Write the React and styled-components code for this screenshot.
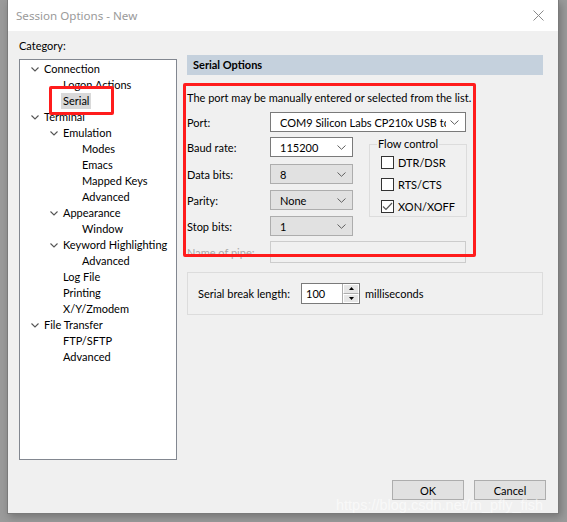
import React from 'react';
import styled, { createGlobalStyle } from 'styled-components';

const GlobalStyle = createGlobalStyle`
  html, body {
    margin: 0;
    padding: 0;
    background: #9b9b9b;
    font-family: Lato, "Liberation Sans", sans-serif;
    font-size: 11px;
    color: #000;
  }
  #root {
    width: 567px;
    height: 522px;
    overflow: hidden;
  }
`;

const TREE = [
  { label: 'Connection', level: 0, open: true },
  { label: 'Logon Actions', level: 1 },
  { label: 'Serial', level: 1, selected: true },
  { label: 'Terminal', level: 0, open: true },
  { label: 'Emulation', level: 1, open: true },
  { label: 'Modes', level: 2 },
  { label: 'Emacs', level: 2 },
  { label: 'Mapped Keys', level: 2 },
  { label: 'Advanced', level: 2 },
  { label: 'Appearance', level: 1, open: true },
  { label: 'Window', level: 2 },
  { label: 'Keyword Highlighting', level: 1, open: true },
  { label: 'Advanced', level: 2 },
  { label: 'Log File', level: 1 },
  { label: 'Printing', level: 1 },
  { label: 'X/Y/Zmodem', level: 1 },
  { label: 'File Transfer', level: 0, open: true },
  { label: 'FTP/SFTP', level: 1 },
  { label: 'Advanced', level: 1 },
];

const Desktop = styled.div`
  position: relative;
  width: 567px;
  height: 522px;
  padding-left: 7px;
  box-sizing: border-box;
`;

const Window = styled.div`
  width: 552px;
  height: 514px;
  background: #f0f0f0;
  border: 1px solid #7a7a7a;
  border-top: none;
  box-sizing: border-box;
  box-shadow: 2px 3px 8px rgba(0, 0, 0, 0.25);
  display: flex;
  flex-direction: column;
`;

const TitleBar = styled.div`
  height: 31px;
  background: #fff;
  display: flex;
  align-items: center;
  justify-content: space-between;
  padding: 0 14px 0 8px;
  flex-shrink: 0;
`;

const Title = styled.span`
  font-family: "Noto Sans", sans-serif;
  font-size: 11.6px;
  color: #9a9a9a;
  margin-top: -1px;
`;

const Body = styled.div`
  flex: 1;
  display: grid;
  grid-template-columns: 158px 1fr;
  column-gap: 10px;
  padding: 7px 15px 0 11px;
  position: relative;
`;

const LeftCol = styled.div`
  display: flex;
  flex-direction: column;
`;

const CategoryLabel = styled.div`
  height: 16px;
  line-height: 16px;
  margin-bottom: 5px;
`;

const TreeBox = styled.div`
  height: 401px;
  background: #fff;
  border: 1px solid #828790;
  box-sizing: border-box;
  padding-top: 1px;
`;

const TreeRow = styled.div`
  height: 16px;
  display: flex;
  align-items: center;
  padding-left: ${(p) => 24 + p.$level * 19}px;
  position: relative;
`;

const Chevron = styled.svg`
  position: absolute;
  left: ${(p) => 11 + p.$level * 19}px;
  top: 6px;
`;

const NodeText = styled.span`
  line-height: 16px;
  padding: 0 2px;
  margin-left: -2px;
  background: ${(p) => (p.$selected ? '#d9d9d9' : 'transparent')};
  white-space: nowrap;
`;

const RightCol = styled.div`
  display: flex;
  flex-direction: column;
  padding-top: 17px;
`;

const SectionHeader = styled.div`
  height: 20px;
  line-height: 20px;
  background: #c5d1dd;
  font-weight: bold;
  padding-left: 6px;
`;

const Intro = styled.div`
  margin-top: 15px;
  height: 16px;
  line-height: 16px;
  white-space: nowrap;
`;

const FieldRow = styled.div`
  display: flex;
  align-items: center;
  height: 20px;
  margin-top: ${(p) => p.$gap ?? 6}px;
`;

const Label = styled.span`
  width: 83px;
  flex-shrink: 0;
  color: ${(p) => (p.$disabled ? '#a8a8a8' : '#000')};
  white-space: nowrap;
`;

const Combo = styled.div`
  width: ${(p) => p.$width}px;
  height: 20px;
  box-sizing: border-box;
  border: 1px solid ${(p) => (p.$editable ? '#7a7a7a' : '#adadad')};
  background: ${(p) => (p.$editable ? '#fff' : '#e1e1e1')};
  display: flex;
  align-items: center;
  padding-left: 9px;
  overflow: hidden;
  white-space: nowrap;
`;

const ComboValue = styled.span`
  flex: 1;
  overflow: hidden;
`;

const ComboArrow = styled.svg`
  flex-shrink: 0;
  margin: 0 6px 0 4px;
`;

const DisabledInput = styled.div`
  width: 196px;
  height: 22px;
  box-sizing: border-box;
  border: 1px solid #cccccc;
  background: #f0f0f0;
`;

const MidBlock = styled.div`
  display: flex;
  align-items: flex-start;
`;

const MidFields = styled.div`
  display: flex;
  flex-direction: column;
`;

const GroupBox = styled.fieldset`
  margin: 0 0 0 16px;
  padding: 5px 0 0 11px;
  width: 98px;
  height: 80px;
  box-sizing: border-box;
  border: 1px solid #dcdcdc;
  margin-top: 5px;
`;

const Legend = styled.legend`
  padding: 0 1px;
  margin-left: -4px;
  line-height: 14px;
`;

const CheckRow = styled.label`
  display: flex;
  align-items: center;
  gap: 4px;
  height: 13px;
  margin-bottom: ${(p) => p.$mb}px;
`;

const CheckBox = styled.span`
  width: 13px;
  height: 13px;
  box-sizing: border-box;
  border: 1px solid #333;
  background: #fff;
  display: flex;
  align-items: center;
  justify-content: center;
`;

const BreakGroup = styled.div`
  margin-top: 10px;
  width: 356px;
  height: 43px;
  box-sizing: border-box;
  border: 1px solid #dcdcdc;
  display: flex;
  align-items: center;
  padding-left: 10px;
  white-space: nowrap;
`;

const BreakLabel = styled.span`
  width: 103px;
  flex-shrink: 0;
`;

const Spinner = styled.div`
  width: 59px;
  height: 21px;
  box-sizing: border-box;
  border: 1px solid #7a7a7a;
  background: #fff;
  display: flex;
  margin-right: 5px;
`;

const SpinValue = styled.span`
  flex: 1;
  padding-left: 4px;
  line-height: 19px;
`;

const SpinButtons = styled.div`
  width: 16px;
  display: flex;
  flex-direction: column;
  border-left: 1px solid #adadad;
`;

const SpinButton = styled.div`
  flex: 1;
  background: #e6e6e6;
  border: 1px solid #fff;
  border-bottom-color: ${(p) => (p.$top ? '#adadad' : '#fff')};
  display: flex;
  align-items: center;
  justify-content: center;
`;

const ButtonBar = styled.div`
  position: absolute;
  right: 12px;
  bottom: 13px;
  display: flex;
  gap: 10px;
`;

const Button = styled.button`
  width: 72px;
  height: 20px;
  border: 1px solid #adadad;
  background: #e1e1e1;
  font-family: inherit;
  font-size: 11px;
  padding: 0;
  color: #000;
`;

const Annotation = styled.div`
  position: absolute;
  left: ${(p) => p.$x}px;
  top: ${(p) => p.$y}px;
  width: ${(p) => p.$w}px;
  height: ${(p) => p.$h}px;
  border: 3px solid #ff1c1c;
  border-radius: 2px;
  box-sizing: border-box;
  pointer-events: none;
`;

const Watermark = styled.div`
  position: absolute;
  left: 336px;
  top: 497px;
  font-family: "Liberation Sans", Arial, sans-serif;
  font-size: 14.5px;
  line-height: 16px;
  color: rgba(255, 255, 255, 0.6);
  white-space: nowrap;
`;

const Arrow = () => (
  <ComboArrow width="9" height="5" viewBox="0 0 9 5">
    <path d="M0.5 0.5 L4.5 4.3 L8.5 0.5" fill="none" stroke="#606060" strokeWidth="1" />
  </ComboArrow>
);

function Select({ value, width = 83, editable }) {
  return (
    <Combo $width={width} $editable={editable}>
      <ComboValue>{value}</ComboValue>
      <Arrow />
    </Combo>
  );
}

function Check({ label, checked, mb = 0 }) {
  return (
    <CheckRow $mb={mb}>
      <CheckBox>
        {checked && (
          <svg width="11" height="9" viewBox="0 0 11 9">
            <path d="M1 4.5 L4 7.5 L10 1" fill="none" stroke="#555" strokeWidth="1.2" />
          </svg>
        )}
      </CheckBox>
      {label}
    </CheckRow>
  );
}

export default function App() {
  return (
    <>
      <GlobalStyle />
      <Desktop>
        <Window>
          <TitleBar>
            <Title>Session Options - New</Title>
            <svg width="11" height="11" viewBox="0 0 11 11">
              <path d="M0.5 0.5 L10.5 10.5 M10.5 0.5 L0.5 10.5" stroke="#8a8a8a" strokeWidth="1" />
            </svg>
          </TitleBar>
          <Body>
            <LeftCol>
              <CategoryLabel>Category:</CategoryLabel>
              <TreeBox>
                {TREE.map((n, i) => (
                  <TreeRow key={i} $level={n.level}>
                    {n.open && (
                      <Chevron $level={n.level} width="8" height="5" viewBox="0 0 8 5">
                        <path d="M0.5 0.5 L4 4 L7.5 0.5" fill="none" stroke="#555" strokeWidth="1.1" />
                      </Chevron>
                    )}
                    <NodeText $selected={n.selected}>{n.label}</NodeText>
                  </TreeRow>
                ))}
              </TreeBox>
            </LeftCol>
            <RightCol>
              <SectionHeader>Serial Options</SectionHeader>
              <Intro>The port may be manually entered or selected from the list.</Intro>
              <FieldRow $gap={6}>
                <Label>Port:</Label>
                <Select value="COM9 Silicon Labs CP210x USB to UART Bridge" width={196} editable />
              </FieldRow>
              <MidBlock>
                <MidFields>
                  <FieldRow $gap={5}>
                    <Label>Baud rate:</Label>
                    <Select value="115200" editable />
                  </FieldRow>
                  <FieldRow $gap={7}>
                    <Label>Data bits:</Label>
                    <Select value="8" />
                  </FieldRow>
                  <FieldRow>
                    <Label>Parity:</Label>
                    <Select value="None" />
                  </FieldRow>
                  <FieldRow>
                    <Label>Stop bits:</Label>
                    <Select value="1" />
                  </FieldRow>
                </MidFields>
                <GroupBox>
                  <Legend>Flow control</Legend>
                  <Check label="DTR/DSR" mb={9} />
                  <Check label="RTS/CTS" mb={9} />
                  <Check label="XON/XOFF" checked />
                </GroupBox>
              </MidBlock>
              <FieldRow $gap={6}>
                <Label $disabled>Name of pipe:</Label>
                <DisabledInput />
              </FieldRow>
              <BreakGroup>
                <BreakLabel>Serial break length:</BreakLabel>
                <Spinner>
                  <SpinValue>100</SpinValue>
                  <SpinButtons>
                    <SpinButton $top>
                      <svg width="5" height="3" viewBox="0 0 5 3"><path d="M0 3 L2.5 0 L5 3Z" fill="#000" /></svg>
                    </SpinButton>
                    <SpinButton>
                      <svg width="5" height="3" viewBox="0 0 5 3"><path d="M0 0 L2.5 3 L5 0Z" fill="#000" /></svg>
                    </SpinButton>
                  </SpinButtons>
                </Spinner>
                milliseconds
              </BreakGroup>
            </RightCol>
            <ButtonBar>
              <Button>OK</Button>
              <Button>Cancel</Button>
            </ButtonBar>
          </Body>
        </Window>
        <Annotation $x={49} $y={86} $w={65} $h={29} />
        <Annotation $x={183} $y={83} $w={293} $h={174} />
        <Watermark>https://blog.csdn.net/m_pfly_fish</Watermark>
      </Desktop>
    </>
  );
}
